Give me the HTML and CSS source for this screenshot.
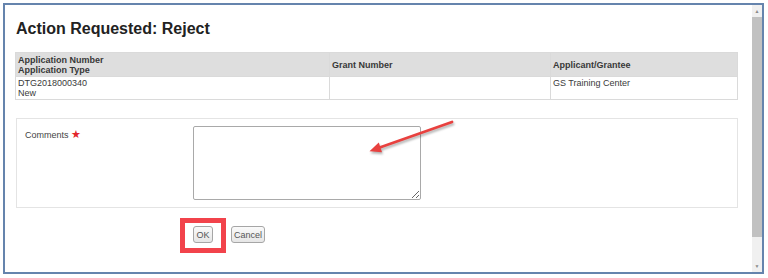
FILE: index.html
```html
<!DOCTYPE html>
<html>
    <head>
        <title>Action Requested: Reject</title>
        <link rel="stylesheet" href="styles.css">
    </head>
    <body>
        <div class="frame">
            <div class="content">
                <h1 class="pageTitle">Action Requested: Reject</h1>
                <table class="appTable">
                    <tr class="headRow">
                        <th class="colApp">Application Number<br>Application Type</th>
                        <th class="colGrant">Grant Number</th>
                        <th class="colGrantee">Applicant/Grantee</th>
                    </tr>
                    <tr class="dataRow">
                        <td>DTG2018000340<br>New</td>
                        <td></td>
                        <td>GS Training Center</td>
                    </tr>
                </table>
                <div class="commentBox">
                    <label class="commentLabel">Comments <span class="req">&#9733;</span></label>
                    <textarea class="commentText"></textarea>
                </div>
                <div class="btnRow">
                    <span class="okWrap">
                        <input type="button" value="OK" class="btncls">
                        <span class="highlight"></span>
                    </span>
                    <input type="button" value="Cancel" class="btncls">
                </div>
                <svg class="arrow" width="100" height="45" viewBox="0 0 100 45">
                    <line x1="92" y1="7" x2="19" y2="32.7" stroke="#e8413f" stroke-width="2.8" stroke-linecap="round"/>
                    <polygon points="9.5,36.2 22,37.2 18.8,27.6" fill="#e8413f"/>
                </svg>
            </div>
            <div class="scrollbar">
                <div class="sbArrow">&#9650;</div>
                <div class="sbThumb"></div>
                <div class="sbTrack"></div>
                <div class="sbArrow">&#9660;</div>
            </div>
        </div>
    </body>
</html>
```

FILE: styles.css
```css
body{
    margin: 0;
    background-color: white;
    font-family: "Liberation Sans", Arial, sans-serif;
}
.frame{
    margin: 3px 0 0 3px;
    width: 757px;
    height: 267px;
    border: 2px solid #6584ad;
    display: flex;
    background-color: white;
}
.content{
    position: relative;
    flex: 1;
    padding: 0 0 0 10px;
}
.pageTitle{
    margin: 14px 0 14px 1px;
    font-size: 16px;
    line-height: 19px;
    color: #222;
}
.appTable{
    width: 723px;
    border-collapse: collapse;
    font-size: 9px;
    line-height: 10px;
    color: #3a3a3a;
}
.appTable th, .appTable td{
    border: 1px solid #dadada;
    text-align: left;
    padding: 0 2px;
}
.headRow{
    height: 24px;
    background-color: #dedede;
}
.headRow th{
    vertical-align: middle;
    color: #383838;
}
.dataRow{
    height: 23px;
}
.dataRow td{
    vertical-align: top;
    padding-top: 1px;
}
.colApp{
    width: 309px;
}
.colGrant{
    width: 216px;
}
.commentBox{
    margin: 18px 0 0 1px;
    width: 720px;
    height: 74px;
    padding: 7px 0 7px 0;
    border: 1px solid #e4e4e4;
    display: flex;
}
.commentLabel{
    width: 168px;
    padding: 3px 0 0 8px;
    font-size: 9px;
    line-height: 10px;
    color: #444;
}
.req{
    color: #e3262c;
    font-size: 11px;
    line-height: 10px;
}
.commentText{
    margin: 0;
    width: 228px;
    height: 74px;
    box-sizing: border-box;
    border: 1px solid #a9a9a9;
    border-radius: 2px;
    resize: both;
}
.btnRow{
    margin: 18px 0 0 178px;
    display: flex;
    gap: 18px;
}
.okWrap{
    position: relative;
    display: flex;
}
.btncls{
    height: 17px;
    padding: 0 2px;
    font-family: "Liberation Sans", Arial, sans-serif;
    font-size: 9px;
    color: #555;
    background: linear-gradient(#fafafa, #e6e6e6);
    border: 1px solid #a6a6a6;
    border-radius: 3px;
}
.okWrap .btncls{
    width: 20px;
}
.highlight{
    position: absolute;
    left: -13px;
    top: -8px;
    width: 36px;
    height: 25px;
    border: 5px solid #f2434b;
}
.arrow{
    position: absolute;
    left: 355px;
    top: 110px;
    filter: drop-shadow(1px 2px 1px rgba(0,0,0,0.3));
}
.scrollbar{
    width: 10px;
    display: flex;
    flex-direction: column;
    background-color: #f0f0f0;
}
.sbArrow{
    height: 12px;
    font-size: 5px;
    line-height: 12px;
    text-align: center;
    color: #8a8a8a;
}
.sbThumb{
    height: 220px;
    background-color: #c1c1c1;
}
.sbTrack{
    flex: 1;
}
```
